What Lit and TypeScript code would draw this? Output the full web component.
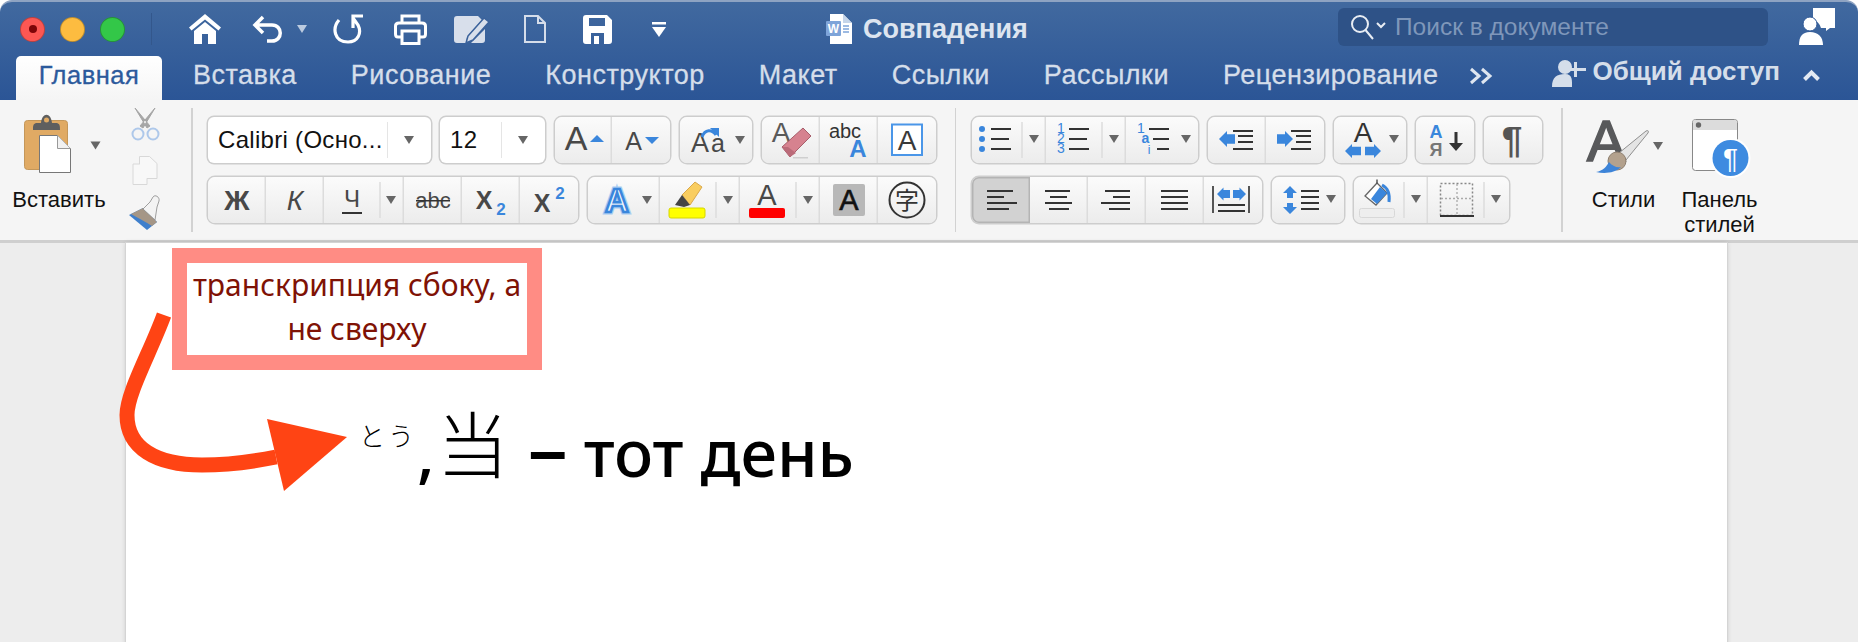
import { LitElement, html, css, svg } from "lit";
import { customElement } from "lit/decorators.js";

const D = "#484848";
const B = "#3a86dc";
const tri = (x: number, y: number) => svg`<polygon points="${x - 5},${y - 4} ${x + 5},${y - 4} ${x},${y + 4}" fill="#666"/>`;
const split = (x: number) => svg`<line x1="${x}" x2="${x}" y1="5" y2="41" stroke="#dcdcdc" stroke-width="1.5"/>`;
/* horizontal rule from x1 to x2 at y */
const L = (segs: number[][]) => segs.map(([a, b, y]) => svg`<rect x="${a}" y="${y - 1}" width="${b - a}" height="2" fill="#333"/>`);
const T = (x: number, y: number, s: number, t: string, fill = D, extra = "") =>
  svg`<text x="${x}" y="${y}" font-size="${s}" fill="${fill}" text-anchor="middle" font-weight="${extra === "b" ? 700 : 400}" font-style="${extra === "i" ? "italic" : "normal"}">${t}</text>`;
/* stubby horizontal block arrows: tip at x, 16 wide, r = half height */
const arrowL = (x: number, y: number, w = 16, r = 8) => svg`<polygon points="${x},${y} ${x + r},${y - r} ${x + r},${y - r * 0.6} ${x + w},${y - r * 0.6} ${x + w},${y + r * 0.6} ${x + r},${y + r * 0.6} ${x + r},${y + r}" fill="${B}"/>`;
const arrowR = (x: number, y: number, w = 16, r = 8) => svg`<polygon points="${x + w},${y} ${x + w - r},${y - r} ${x + w - r},${y - r * 0.6} ${x},${y - r * 0.6} ${x},${y + r * 0.6} ${x + w - r},${y + r * 0.6} ${x + w - r},${y + r}" fill="${B}"/>`;

const cell = (w: number, body: unknown, cls = "") =>
  html`<div class="cell ${cls}"><svg width="${w}" height="46" viewBox="0 0 ${w} 46">${body}</svg></div>`;

@customElement("app-root")
export class AppRoot extends LitElement {
  static styles = css`
    :host { display: block; width: 1858px; height: 642px; overflow: hidden; background: #fff; font-family: "Liberation Sans", Arial, sans-serif; }
    svg { display: block; font-family: "Liberation Sans", Arial, sans-serif; }
    .head { background: linear-gradient(#41699f, #2b5596); border-top: 2px solid #8ea3c2; border-radius: 12px 12px 0 0; height: 100px; box-sizing: border-box; display: flex; flex-direction: column; }
    .title { height: 54px; display: flex; align-items: center; position: relative; }
    .light { width: 25px; height: 25px; border-radius: 50%; box-sizing: border-box; border: 1px solid rgba(0,0,0,.25); margin-right: 15px; display: flex; align-items: center; justify-content: center; }
    .red { background: #fc5753; margin-left: 20px; }
    .red::after { content: ""; width: 8px; height: 8px; border-radius: 50%; background: #7e0508; }
    .yel { background: #fdbc40; }
    .grn { background: #33c748; }
    .qsep { width: 1px; height: 32px; background: #33578c; margin-left: 11px; margin-right: 37px; }
    .qa { display: flex; align-items: center; }
    .m31 { margin-left: 31px; }
    .m13 { margin-left: 13px; }
    .m26 { margin-left: 26px; }
    .m27 { margin-left: 27px; }
    .m33 { margin-left: 33px; }
    .m37 { margin-left: 37px; }
    .m40 { margin-left: 40px; }
    .doc-name { position: absolute; left: 826px; top: 0; height: 54px; display: flex; align-items: center; gap: 11px; color: #dde4ef; font-weight: 700; font-size: 27px; }
    .search { position: absolute; left: 1338px; top: 6px; width: 430px; height: 38px; background: #2e5287; border-radius: 6px; display: flex; align-items: center; color: #7f97ba; font-size: 24.5px; font-weight: 400; padding-left: 12px; box-sizing: border-box; gap: 9px; }
    .fb { position: absolute; left: 1799px; top: 6px; }
    .tabs { flex: 1; display: flex; align-items: stretch; padding-left: 16px; color: #d5deea; font-size: 27px; letter-spacing: .5px; -webkit-text-stroke: .3px; }
    .tab { display: flex; align-items: center; margin-right: 54px; padding-bottom: 5px; white-space: nowrap; }
    .tab.on { background: linear-gradient(#fff, #f5f5f5); color: #2c5a9c; width: 146px; justify-content: center; border-radius: 5px 5px 0 0; margin-right: 31px; font-size: 25.5px; }
    .tab.more { margin-left: -23px; margin-right: 0; }
    .share { margin-left: auto; display: flex; align-items: center; gap: 7px; font-weight: 700; font-size: 26px; letter-spacing: 0; padding-bottom: 13px; -webkit-text-stroke: 0; }
    .up { margin-left: 23px; margin-right: 38px; align-self: center; margin-bottom: 6px; }
    .ribbon { background: #f5f5f5; height: 143px; box-sizing: border-box; border-bottom: 3px solid #cfcfcf; display: flex; }
    .sep { width: 1.5px; height: 124px; background: #d2d2d2; margin-top: 8px; flex: none; }
    .clip { width: 191px; flex: none; position: relative; }
    .lbl { font-size: 22px; color: #111; text-align: center; line-height: 25px; }
    .lbl-paste { position: absolute; left: 9px; top: 87px; width: 100px; }
    .col { display: flex; flex-direction: column; gap: 14px; padding-top: 17px; flex: none; }
    .font-col { width: 762px; padding-left: 15.5px; box-sizing: border-box; }
    .para-col { width: 605px; padding-left: 16px; box-sizing: border-box; }
    .row { display: flex; gap: 10px; height: 46px; }
    .grp { display: flex; height: 46px; border-radius: 7px; background: linear-gradient(#fbfbfb, #ececec); box-shadow: 0 0 0 1.5px #cdcdcd; }
    .cell { box-shadow: inset -1.5px 0 #dcdcdc; flex: none; }
    .cell:last-child { box-shadow: none; }
    .cell:first-child { border-radius: 7px 0 0 7px; }
    .cell:last-child { border-radius: 0 7px 7px 0; }
    .cell.act { background: #d2d2d2; box-shadow: inset 0 0 0 1.5px #b4b4b4; }
    .combo { background: #fff; border-radius: 6px; box-shadow: 0 0 0 1.5px #cdcdcd; height: 46px; display: flex; align-items: center; font-size: 24px; letter-spacing: .3px; color: #111; box-sizing: border-box; padding-left: 10px; position: relative; }
    .c1 { width: 223px; }
    .c2 { width: 105px; margin-left: -1px; }
    .combo svg { position: absolute; right: 0; top: 0; }
    .styles { position: relative; flex: 1; }
    .lbl-st { position: absolute; left: 16px; top: 87px; width: 90px; }
    .lbl-pn { position: absolute; left: 102px; top: 87px; width: 110px; }
    .st-svg { position: absolute; left: 0; top: 0; }
    .area { flex: 1; background: #ededed; height: 399px; }
    .page { width: 1601px; margin-left: 126px; height: 420px; background: #fff; box-shadow: 0 0 0 1px #d4d4d4, 0 0 5px rgba(0,0,0,.18); position: relative; box-sizing: border-box; padding: 5px 0 0 46px; }
    .note { width: 370px; height: 122px; box-sizing: border-box; border: 15px solid #ff8c84; color: #7f1205; font-family: "Noto Sans", sans-serif; font-size: 30px; line-height: 44px; text-align: center; padding-top: 0; white-space: nowrap; }
    .big { font-family: "Noto Sans", "Noto Sans CJK JP", sans-serif; font-size: 65px; font-weight: 500; color: #000; margin: 35px 0 0 187px; line-height: 90px; height: 90px; white-space: nowrap; }
    .rt { font-family: "Noto Sans CJK JP", sans-serif; font-size: 26px; font-weight: 300; vertical-align: 31px; letter-spacing: 3px; line-height: 1; }
    .kan { font-family: "Noto Sans CJK JP", sans-serif; font-weight: 300; font-size: 72px; margin: 0 19px 0 2px; vertical-align: 5px; line-height: 1; }
    .dash { font-size: 80px; margin-right: -1px; line-height: 1; }
    .arrow { position: absolute; left: 0; top: 0; overflow: visible; }
  `;

  renderTitle() {
    return html`<div class="title">
      <div class="light red"></div><div class="light yel"></div><div class="light grn"></div>
      <div class="qsep"></div>
      <div class="qa">
        <svg width="32" height="30" viewBox="0 0 32 30"><path d="M16 0 32 13.500 29.500 16.500 16 5.500 2.500 16.500 0 13.500Z M5 17 16 8 27 17V30H19V20H13V30H5Z" fill="#fff"/></svg>
        <svg class="m31" width="32" height="28" viewBox="0 0 32 28" fill="none" stroke="#fff" stroke-width="3.500"><path d="M11 2 3 10 11 18M3 10H20C31 10 31 26 20 26H15"/></svg>
        <svg class="m13" width="10" height="8" viewBox="0 0 10 8"><polygon points="0,0 10,0 5,8" fill="#bccbe0"/></svg>
        <svg class="m26" width="30" height="30" viewBox="0 0 30 30" fill="none" stroke="#fff" stroke-width="3.200"><path d="M6 6C-1 14 1 28 15 28 25 28 29 19 25 11L20 4M20 14V2H30"/></svg>
        <svg class="m31" width="33" height="31" viewBox="0 0 33 31" fill="none" stroke="#fff" stroke-width="3"><path d="M8 9V2H25V9M8 23H4C2 23 1.500 22 1.500 20V12C1.500 10 3 9 5 9H28C30 9 31.500 10 31.500 12V20C31.500 22 31 23 29 23H25"/><rect x="8" y="17" width="17" height="12.500"/></svg>
        <svg class="m27" width="37" height="29" viewBox="0 0 37 29"><path d="M3 1H24L28 5 13 22 12 28H3C1 28 0 27 0 25V4C0 2 1 1 3 1Z M17 28 31 14V25C31 27 30 28 28 28Z" fill="#d8dfeb"/><path d="M14 21 30 3 35 7 19 25 12 28Z" fill="#d8dfeb" stroke="#3b629b" stroke-width="1.500"/></svg>
        <svg class="m33" width="22" height="28" viewBox="0 0 22 28" fill="none" stroke="#d5ddea" stroke-width="2"><path d="M1 1H14L21 8V27H1ZM14 1V8H21"/></svg>
        <svg class="m37" width="29" height="29" viewBox="0 0 29 29"><path d="M3 0H24L29 5V26C29 28 28 29 26 29H3C1 29 0 28 0 26V3C0 1 1 0 3 0ZM6 3V11H22V3ZM8 18V29H21V18Z" fill="#fff" fill-rule="evenodd"/><rect x="11" y="21" width="5" height="8" fill="#fff"/></svg>
        <svg class="m40" width="14" height="15" viewBox="0 0 14 15"><rect width="14" height="2.500" fill="#fff"/><polygon points="0,5 14,5 7,15" fill="#fff"/></svg>
      </div>
      <div class="doc-name">
        <svg width="26" height="30" viewBox="0 0 26 30"><path d="M4 0H17L26 9V30H4Z" fill="#fff"/><path d="M17 0 26 9H17Z" fill="#c5d5ea"/><rect x="0" y="7" width="15" height="15" rx="1" fill="#7ea4d9"/><text x="7.500" y="19" font-size="12" fill="#fff" text-anchor="middle">W</text><path d="M17 12H23M17 15H23M17 18H23" stroke="#7ea4d9" stroke-width="1.500"/></svg>
        <span>Совпадения</span>
      </div>
      <div class="search">
        <svg width="36" height="26" viewBox="0 0 36 26" fill="none" stroke="#e8edf4" stroke-width="2"><circle cx="10" cy="10" r="8"/><path d="M15.500 16 23 25M27 9 31 13 35 9"/></svg>
        <span>Поиск в документе</span>
      </div>
      <svg class="fb" width="36" height="38" viewBox="0 0 36 38"><path d="M14 0H36V20H31L27 23V20H22C21 17 20 14 14 12Z" fill="#fff"/><circle cx="11" cy="16" r="7" fill="#fff" stroke="#2f5896" stroke-width="1"/><path d="M0 37C0 29 3 24 11 24 19 24 24 29 24 37Z" fill="#fff"/></svg>
    </div>`;
  }

  renderTabs() {
    const names = ["Вставка", "Рисование", "Конструктор", "Макет", "Ссылки", "Рассылки", "Рецензирование"];
    return html`<div class="tabs">
      <div class="tab on">Главная</div>
      ${names.map((n) => html`<div class="tab">${n}</div>`)}
      <div class="tab more"><svg width="24" height="18" viewBox="0 0 24 18" fill="none" stroke="#dfe6f0" stroke-width="3"><path d="M2 2 10 9 2 16M13 2 21 9 13 16"/></svg></div>
      <div class="share">
        <svg width="34" height="30" viewBox="0 0 34 30" fill="#d5deea"><circle cx="13" cy="10" r="7"/><path d="M0 30C0 20 5 17 13 17 21 17 20 24 20 30ZM22 9V5H25V11H34V14H25V20H22V14H17V11H22Z"/></svg>
        <span>Общий доступ</span>
      </div>
      <svg class="up" width="17" height="12" viewBox="0 0 17 12" fill="none" stroke="#e3e9f2" stroke-width="4"><path d="M1.500 10.500 8.500 3.500 15.500 10.500"/></svg>
    </div>`;
  }

  renderClip() {
    return html`<div class="clip">
      <svg width="190" height="137" viewBox="0 0 190 137">
        <rect x="24.500" y="20.500" width="43" height="49" rx="3" fill="#e0aa64" stroke="#c4975a"/>
        <path d="M33 30C33 26 33 24 36 23H41C42 12 51 12 52 23H57C60 24 60 26 60 30Z" fill="#5f5f5f"/>
        <circle cx="46.500" cy="20" r="2.500" fill="#e0aa64"/>
        <path d="M39.500 35.500H57.500L70.500 48.500V72.500H39.500Z" fill="#fff" stroke="#777"/><path d="M57.500 35.500V48.500H70.500" fill="#f1f1f1" stroke="#999"/>
        ${tri(95.5, 45.500)}
        <path d="M135 8 147 28 150 26ZM155 8 143 28 140 26Z" fill="#a6a6a6" stroke="#a6a6a6"/>
        <circle cx="138" cy="34" r="5.500" fill="none" stroke="#aec8ea" stroke-width="2"/><circle cx="153" cy="34" r="5.500" fill="none" stroke="#aec8ea" stroke-width="2"/>
        <path d="M139.500 56.500H149.500L157 63.500V78.500H139.500Z" fill="#f8f8f8" stroke="#d8d8d8"/>
        <path d="M139.500 64H133V84.500H147V78.500" fill="#f8f8f8" stroke="#d8d8d8"/>
        <path d="M143 108 157 122 147 130 129 115Z" fill="#3f7fcc"/>
        <path d="M143 108 157 122 152 126C146 122 138 118 131 114Z" fill="#a59686"/>
        <path d="M143 109 150 102 153 97C155 94 160 97 159 101L157 107 155 120Z" fill="#f3f3f3" stroke="#888" stroke-width=".8"/>
      </svg>
      <div class="lbl lbl-paste">Вставить</div>
    </div>`;
  }

  renderFont() {
    return html`<div class="col font-col">
      <div class="row">
        <div class="combo c1">Calibri (Осно...<svg width="44" height="46" viewBox="0 0 44 46">${split(0)}${tri(22, 23)}</svg></div>
        <div class="combo c2">12<svg width="44" height="46" viewBox="0 0 44 46">${split(0)}${tri(22, 23)}</svg></div>
        <div class="grp">
          ${cell(57, svg`${T(21, 33, 34, "A")}<polygon points="35,25 49,25 42,18" fill="${B}"/>`)}
          ${cell(58, svg`${T(21.5, 33, 25, "A")}<polygon points="33,20 47,20 40,27" fill="${B}"/>`)}
        </div>
        <div class="grp">
          ${cell(72, svg`${T(20, 35, 27, "A")}${T(38, 35, 25, "a")}<path d="M22 20C25 12 32 12 36 18" fill="none" stroke="${B}" stroke-width="3"/><polygon points="30,11 39,11 39,20" fill="${B}"/>${tri(60, 23)}`)}
        </div>
        <div class="grp">
          ${cell(58, svg`${T(19, 25, 28, "A", "#5a5a5a")}<rect x="31" y="40" width="15" height="1.500" fill="#cfcfcf"/><polygon points="20,30 41,11 49,19 28,40" fill="#d6828f" stroke="#a75e6b"/><polygon points="20,30 26,30 34,36 28,40" fill="#bb6b79"/>`)}
          ${cell(58, svg`${T(25, 21, 20, "abc", "#333")}${T(38, 40, 24, "A", B, "b")}`)}
          ${cell(58, svg`<rect x="14" y="7.500" width="30" height="30.500" fill="#fff" stroke="#4a96e8" stroke-width="2"/>${T(29, 33, 28, "A", "#3a3a3a")}`)}
        </div>
      </div>
      <div class="row">
        <div class="grp">
          ${cell(58, svg`${T(29, 33, 28, "Ж", D, "b")}`)}
          ${cell(58, svg`${T(29, 33, 28, "К", D, "i")}`)}
          ${cell(80, svg`${T(28, 30, 24, "Ч", D)}<rect x="18" y="35" width="20" height="2" fill="#333"/>${split(56)}${tri(67, 23)}`)}
          ${cell(58, svg`${T(29, 31, 22, "abc", D)}<rect x="12" y="23" width="34" height="1.500" fill="#333"/>`)}
          ${cell(58, svg`${T(22, 32, 25, "X", D, "b")}${T(39, 38, 17, "2", B, "b")}`)}
          ${cell(58, svg`${T(22, 35, 25, "X", D, "b")}${T(40, 22, 17, "2", B, "b")}`)}
        </div>
        <div class="grp">
          ${cell(72, svg`<text x="29" y="35" font-size="33" font-weight="700" fill="none" stroke="#a9cdf2" stroke-width="5" text-anchor="middle">A</text><text x="29" y="35" font-size="33" font-weight="700" fill="#f2f7fd" stroke="${B}" stroke-width="2.500" text-anchor="middle">A</text>${tri(59, 23)}`)}
          ${cell(80, svg`<polygon points="22,18 35,5 42,10 30,28" fill="#f9cd5f" stroke="#d9a84a"/><polygon points="15,28 22,18 30,28 24,30" fill="#444"/><rect x="9" y="31" width="36" height="10" rx="2" fill="#ffff00" stroke="#d6d600"/>${split(56)}${tri(68, 23)}`)}
          ${cell(80, svg`${T(27, 28, 29, "A")}<rect x="9" y="31" width="36" height="10" rx="2" fill="#f00"/>${split(56)}${tri(68, 23)}`)}
          ${cell(58, svg`<rect x="13" y="7" width="32" height="32" rx="2" fill="#b8b8b8"/><text x="29" y="33" font-size="29" fill="#111" stroke="#111" stroke-width=".6" text-anchor="middle">A</text>`)}
          ${cell(58, svg`<circle cx="29" cy="23" r="17.500" fill="none" stroke="#333" stroke-width="2"/><text x="29" y="31.500" font-size="24" text-anchor="middle" fill="#333" font-family="Noto Sans CJK JP">字</text>`)}
        </div>
      </div>
    </div>`;
  }

  renderPara() {
    return html`<div class="col para-col">
      <div class="row">
        <div class="grp">
          ${cell(74, svg`<g fill="${B}"><circle cx="10" cy="12" r="3"/><circle cx="10" cy="22" r="3"/><circle cx="10" cy="32" r="3"/></g>${L([[19, 39, 12], [19, 37, 22], [19, 39, 32]])}${split(50)}${tri(62, 22)}`)}
          ${cell(80, svg`<g font-size="14" fill="${B}" text-anchor="middle"><text x="15" y="16">1</text><text x="15" y="26">2</text><text x="15" y="36">3</text></g>${L([[23, 43, 12], [23, 41, 22], [23, 43, 32]])}${split(56)}${tri(68, 22)}`)}
          ${cell(72, svg`<g fill="${B}" font-size="14" text-anchor="middle"><text x="15" y="16">1</text><text x="19.500" y="26" font-weight="700">a</text><text x="23" y="37" font-size="12">i</text></g>${L([[23, 43, 12], [27, 43, 22], [31, 43, 32]])}${tri(60, 22)}`)}
        </div>
        <div class="grp">
          ${cell(58, svg`${arrowL(11, 22)}${L([[25, 45, 14], [30, 45, 19], [30, 45, 25], [25, 45, 32]])}`)}
          ${cell(58, svg`${arrowR(11, 22)}${L([[25, 45, 14], [30, 45, 19], [30, 45, 25], [25, 45, 32]])}`)}
        </div>
        <div class="grp">
          ${cell(72, svg`${T(29, 25, 28, "A", "#333")}${arrowL(11, 34, 16, 7)}${arrowR(31, 34, 16, 7)}${tri(60, 22)}`)}
        </div>
        <div class="grp">
          ${cell(58, svg`${T(20, 21, 18, "A", B, "b")}${T(20, 39, 18, "Я", "#777", "b")}<path d="M40 15V28" stroke="#333" stroke-width="3"/><polygon points="33,26 47,26 40,34" fill="#333"/>`)}
        </div>
        <div class="grp">
          ${cell(58, svg`${T(28, 36, 37, "¶", "#555", "b")}`)}
        </div>
      </div>
      <div class="row">
        <div class="grp">
          ${cell(58, L([[15, 41, 14], [15, 32, 20], [15, 45, 26], [15, 37, 32]]), "act")}
          ${cell(58, L([[15, 40, 14], [20, 37, 20], [15, 42, 26], [19, 39, 32]]))}
          ${cell(58, L([[17, 42, 14], [25, 42, 20], [13, 42, 26], [21, 42, 32]]))}
          ${cell(58, L([[15, 42, 14], [15, 42, 20], [15, 42, 26], [15, 42, 32]]))}
          ${cell(58, svg`<rect x="8" y="9" width="2" height="27" fill="#555"/><rect x="44" y="9" width="2" height="27" fill="#555"/>${arrowL(13, 17, 13, 6.500)}${arrowR(29, 17, 13, 6.500)}${L([[14, 41, 28], [14, 41, 34]])}`)}
        </div>
        <div class="grp">
          ${cell(72, svg`<polygon points="18,9 25,16 21,16 21,21 15,21 15,16 11,16" fill="${B}"/><polygon points="18,37 25,30 21,30 21,26 15,26 15,30 11,30" fill="${B}"/>${L([[29, 47, 14], [29, 47, 20], [29, 47, 26], [29, 47, 32]])}${tri(59, 22)}`)}
        </div>
        <div class="grp">
          ${cell(74, svg`<polygon points="11,19 23,6 33,16 22,28" fill="#fff" stroke="#666" stroke-width="1.300"/><polygon points="26,10 33,16 23,27 17,22" fill="${B}"/><path d="M23 7V2.500" stroke="#555" stroke-width="1.500"/><path d="M28 8C34 11 36 17 35 25" stroke="${B}" stroke-width="3" fill="none"/><rect x="5.500" y="31.500" width="35" height="9" rx="2" fill="#eee" stroke="#d8d8d8"/>${split(50)}${tri(62, 22)}`)}
          ${cell(81, svg`<rect x="12.500" y="6.500" width="32" height="32" fill="none" stroke="#888" stroke-width="1.500" stroke-dasharray="2 2"/><path d="M29 7V38M13 21.500H44" stroke="#aaa" stroke-width="1.300" stroke-dasharray="2 2"/><rect x="12" y="38" width="34" height="2" fill="#333"/>${split(56)}${tri(68, 22)}`)}
        </div>
      </div>
    </div>`;
  }

  renderStyles() {
    return html`<div class="styles">
      <svg class="st-svg" width="295" height="137" viewBox="0 0 295 137">
        <text x="43" y="61" font-size="58" fill="#58595b" stroke="#58595b" stroke-width="1.500" text-anchor="middle">A</text>
        <path d="M56 53 83 31C85 30 86 31 85 33L63 60Z" fill="#e4e4e4" stroke="#8f8f8f"/>
        <circle cx="54" cy="61" r="9" fill="#b3a18d" stroke="#8d7e6e"/>
        <path d="M33 72C40 71 44 66 46 62 49 66 54 68 58 67 52 73 42 74 33 72Z" fill="#3d84d8"/>
        ${tri(95, 46)}
        <rect x="129.500" y="19.500" width="45" height="51" rx="3" fill="#fff" stroke="#888"/><path d="M130 22C130 20 131 20 132 20H172C173 20 174 21 174 22V30H130Z" fill="#dcdcdc"/><circle cx="135.500" cy="25" r="2.700" fill="#666"/>
        <circle cx="167.500" cy="58" r="20" fill="#fff"/><circle cx="167.500" cy="58" r="18" fill="#3e8be0"/><text x="167.500" y="68" font-size="28" fill="#fff" text-anchor="middle">¶</text>
      </svg>
      <div class="lbl lbl-st">Стили</div>
      <div class="lbl lbl-pn">Панель<br />стилей</div>
    </div>`;
  }

  render() {
    return html`
      <div class="head">${this.renderTitle()}${this.renderTabs()}</div>
      <div class="ribbon">
        ${this.renderClip()}<div class="sep"></div>
        ${this.renderFont()}<div class="sep"></div>
        ${this.renderPara()}<div class="sep"></div>
        ${this.renderStyles()}
      </div>
      <div class="area">
        <div class="page">
          <div class="note">транскрипция сбоку, а<br />не сверху</div>
          <div class="big"><span class="rt">とう</span>,<span class="kan">当</span><span class="dash">–</span> тот день</div>
          <svg class="arrow" width="400" height="399" viewBox="0 0 400 399">
            <path d="M38 72C24 110 1 150 1 172 1 205 30 222 76 222 105 222 130 218 150 214" fill="none" stroke="#ff4414" stroke-width="15"/>
            <polygon points="141,176 221,194 158,248" fill="#ff4414"/>
          </svg>
        </div>
      </div>
    `;
  }
}
